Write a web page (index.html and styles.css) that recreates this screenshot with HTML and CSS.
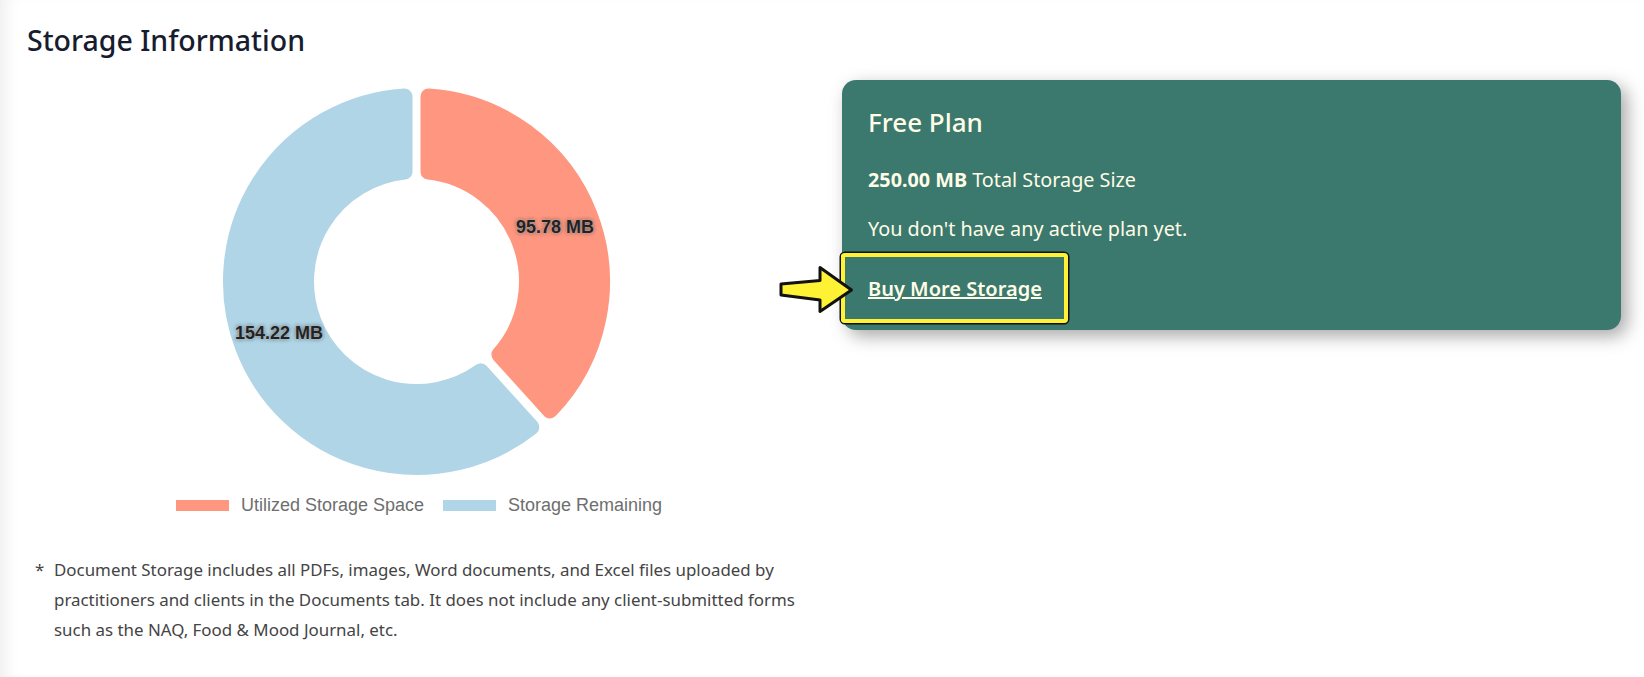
FILE: index.html
```html
<!DOCTYPE html>
<html lang="en">
<head>
    <meta charset="UTF-8">
    <title>Storage Information</title>
    <link rel="stylesheet" href="styles.css">
</head>
<body>
    <div class="main">
        <h1 class="pageTitle">Storage Information</h1>
        <div class="content">
            <div class="chartSide">
                <div class="chart">
                    <svg class="donut" width="403" height="403" viewBox="-201.5 -201.5 403 403">
                        <path class="sliceUsed" d="M12,-185.11 A185.5,185.5 0 0 1 133.36,128.94 L82.89,73.07 A110.5,110.5 0 0 0 12,-109.85 Z"/>
                        <path class="sliceFree" d="M114.82,145.69 A185.5,185.5 0 1 1 -12,-185.11 L-12,-109.85 A110.5,110.5 0 1 0 64.32,89.85 Z"/>
                    </svg>
                    <span class="sliceLabel labelUsed">95.78 MB</span>
                    <span class="sliceLabel labelFree">154.22 MB</span>
                </div>
                <div class="legend">
                    <span class="swatch swatchUsed"></span>
                    <span class="legendText">Utilized Storage Space</span>
                    <span class="swatch swatchFree"></span>
                    <span class="legendText">Storage Remaining</span>
                </div>
                <div class="note">
                    <span class="noteMark">*</span>
                    <p>Document Storage includes all PDFs, images, Word documents, and Excel files uploaded by practitioners and clients in the Documents tab. It does not include any client-submitted forms such as the NAQ, Food &amp; Mood Journal, etc.</p>
                </div>
            </div>
            <div class="planCard">
                <h2 class="planName">Free Plan</h2>
                <p class="planLine"><b>250.00 MB</b> Total Storage Size</p>
                <p class="planLine">You don't have any active plan yet.</p>
                <div class="buyRow">
                    <svg class="arrow" width="78" height="52" viewBox="0 0 78 52">
                        <path d="M3,20 L42,16.5 L42,3.5 L73.5,26 L42,47.5 L42,36 L3,31 Z"/>
                    </svg>
                    <a class="buyLink" href="#">Buy More Storage</a>
                </div>
            </div>
        </div>
    </div>
</body>
</html>
```

FILE: styles.css
```css
* {
    margin: 0;
    padding: 0;
    box-sizing: border-box;
}
body {
    background-color: #fff;
    font-family: 'Noto Sans', 'Open Sans', sans-serif;
    color: #444;
    overflow: hidden;
}
.main {
    height: 677px;
    padding: 20px 23px 0 27px;
    box-shadow: inset 16px 0 16px -10px #efefef;
}
.pageTitle {
    font-size: 28.5px;
    font-weight: 500;
    line-height: 40px;
    margin-bottom: 20px;
    color: #171c2e;
}
.content {
    display: flex;
    align-items: flex-start;
    gap: 36px;
}
.chartSide {
    width: 779px;
    flex-shrink: 0;
}
.chart {
    position: relative;
    width: 403px;
    height: 403px;
    margin: 0 auto;
}
.donut {
    display: block;
}
.sliceUsed,
.sliceFree {
    stroke-width: 16;
    stroke-linejoin: round;
}
.sliceUsed {
    fill: #ff9780;
    stroke: #ff9780;
}
.sliceFree {
    fill: #b0d5e7;
    stroke: #b0d5e7;
}
.sliceLabel {
    position: absolute;
    font-family: 'Liberation Sans', Arial, sans-serif;
    font-size: 18px;
    font-weight: 700;
    line-height: 21px;
    color: #222;
    text-shadow: 0 0 2px rgba(255, 255, 255, 0.6), 0 0 4px #444;
}
.labelUsed {
    left: 301px;
    top: 137px;
}
.labelFree {
    left: 20px;
    top: 243px;
}
.legend {
    display: flex;
    align-items: center;
    justify-content: center;
    height: 24px;
    margin-top: 10px;
    padding-left: 5px;
    font-family: 'Liberation Sans', Arial, sans-serif;
    font-size: 18px;
    color: #6e6e6e;
}
.swatch {
    width: 53px;
    height: 11px;
    margin-right: 12px;
}
.swatchUsed {
    background-color: #ff9780;
}
.swatchFree {
    background-color: #b0d5e7;
}
.legendText {
    margin-right: 19px;
}
.legendText:last-child {
    margin-right: 0;
}
.note {
    display: flex;
    margin-top: 38px;
    padding-left: 8px;
    font-size: 16.9px;
    line-height: 30px;
}
.noteMark {
    width: 19px;
    flex-shrink: 0;
}
.planCard {
    flex: 1;
    padding: 24px 26px 7px;
    background-color: #3b786d;
    border-radius: 14px;
    box-shadow: 6px 6px 18px rgba(0, 0, 0, 0.35);
    color: #fffde7;
}
.planName {
    font-size: 26px;
    font-weight: 500;
    line-height: 36px;
    margin-bottom: 26px;
}
.planLine {
    font-size: 19.8px;
    line-height: 27px;
    margin-bottom: 22px;
}
.buyRow {
    position: relative;
    margin-top: -11px;
}
.arrow {
    position: absolute;
    left: -90px;
    top: 11px;
    z-index: 1;
}
.arrow path {
    fill: #fff133;
    stroke: #111;
    stroke-width: 3;
    stroke-linejoin: round;
}
.buyLink {
    display: inline-block;
    margin-left: -27px;
    padding: 20px 22px 18px 23px;
    border: 4px solid #fff133;
    border-radius: 4px;
    box-shadow: 0 0 0 1.5px #111;
    font-size: 20px;
    font-weight: 600;
    line-height: 24px;
    color: #fffde7;
}
```
